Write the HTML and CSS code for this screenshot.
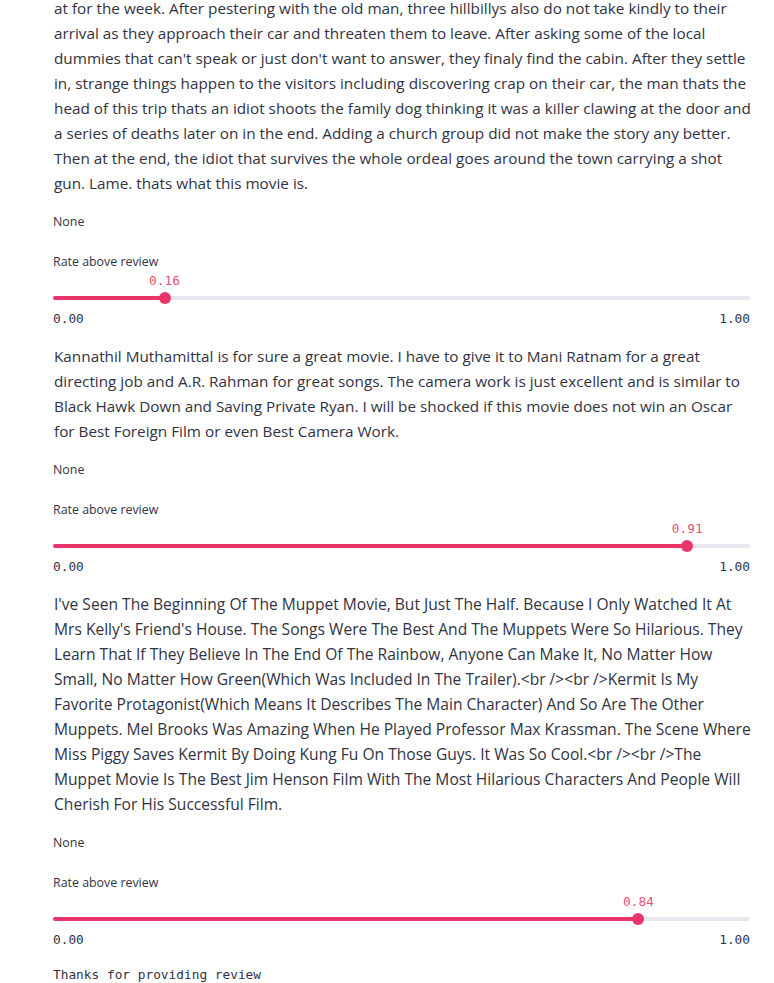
FILE: index.html
```html
<!DOCTYPE html>
<html lang="en">
<head>
<meta charset="utf-8">
<link rel="stylesheet" href="styles.css">
</head>
<body>
<main class="main">
  <p class="review first">at for the week. After pestering with the old man, three hillbillys also do not take kindly to their arrival as they approach their car and threaten them to leave. After asking some of the local dummies that can't speak or just don't want to answer, they finaly find the cabin. After they settle in, strange things happen to the visitors including discovering crap on their car, the man thats the head of this trip thats an idiot shoots the family dog thinking it was a killer clawing at the door and a series of deaths later on in the end. Adding a church group did not make the story any better. Then at the end, the idiot that survives the whole ordeal goes around the town carrying a shot gun. Lame. thats what this movie is.</p>
  <div class="none">None</div>
  <div class="slider">
    <div class="slider-label">Rate above review</div>
    <div class="slider-body">
      <div class="track">
        <div class="track-fill" style="width:16%"></div>
        <div class="thumb" style="left:16%"><span class="thumb-value">0.16</span></div>
      </div>
      <div class="ticks"><span>0.00</span><span>1.00</span></div>
    </div>
  </div>

  <p class="review">Kannathil Muthamittal is for sure a great movie. I have to give it to Mani Ratnam for a great directing job and A.R. Rahman for great songs. The camera work is just excellent and is similar to Black Hawk Down and Saving Private Ryan. I will be shocked if this movie does not win an Oscar for Best Foreign Film or even Best Camera Work.</p>
  <div class="none">None</div>
  <div class="slider">
    <div class="slider-label">Rate above review</div>
    <div class="slider-body">
      <div class="track">
        <div class="track-fill" style="width:91%"></div>
        <div class="thumb" style="left:91%"><span class="thumb-value">0.91</span></div>
      </div>
      <div class="ticks"><span>0.00</span><span>1.00</span></div>
    </div>
  </div>

  <p class="review title-case">I've Seen The Beginning Of The Muppet Movie, But Just The Half. Because I Only Watched It At Mrs Kelly's Friend's House. The Songs Were The Best And The Muppets Were So Hilarious. They Learn That If They Believe In The End Of The Rainbow, Anyone Can Make It, No Matter How Small, No Matter How Green(Which Was Included In The Trailer).&lt;br /&gt;&lt;br /&gt;Kermit Is My Favorite Protagonist(Which Means It Describes The Main Character) And So Are The Other Muppets. Mel Brooks Was Amazing When He Played Professor Max Krassman. The Scene Where Miss Piggy Saves Kermit By Doing Kung Fu On Those Guys. It Was So Cool.&lt;br /&gt;&lt;br /&gt;The Muppet Movie Is The Best Jim Henson Film With The Most Hilarious Characters And People Will Cherish For His Successful Film.</p>
  <div class="none">None</div>
  <div class="slider">
    <div class="slider-label">Rate above review</div>
    <div class="slider-body">
      <div class="track">
        <div class="track-fill" style="width:84%"></div>
        <div class="thumb" style="left:84%"><span class="thumb-value">0.84</span></div>
      </div>
      <div class="ticks"><span>0.00</span><span>1.00</span></div>
    </div>
  </div>

  <div class="thanks">Thanks for providing review</div>
</main>
</body>
</html>
```
FILE: styles.css
```css
html, body {
  margin: 0;
  padding: 0;
  background: #ffffff;
}

body {
  color: #31333f;
  font-family: "Open Sans", "Noto Sans", sans-serif;
  overflow: hidden;
}

.main {
  width: 701px;
  padding-left: 53px;
  display: flex;
  flex-direction: column;
}

.review {
  margin: 0;
  padding-left: 1px;
  padding-right: 1px;
  font-size: 15.3px;
  line-height: 25px;
}

.review.first {
  margin-top: -4.5px;
}

.review.title-case {
  font-size: 15.6px;
}

.none {
  margin-top: 16.5px;
  font-size: 12.4px;
  line-height: 20px;
}

.slider {
  width: 697px;
  margin-top: 20px;
  margin-bottom: 12.5px;
  display: flex;
  flex-direction: column;
}

.slider-label {
  font-size: 12.4px;
  line-height: 20px;
}

.slider-body {
  padding-top: 17px;
  display: flex;
  flex-direction: column;
}

.track {
  position: relative;
  height: 4px;
  margin: 7px 0;
  border-radius: 2px;
  background: #e6e8ee;
}

.track-fill {
  height: 100%;
  border-radius: 2px;
  background: #e9356a;
}

.thumb {
  position: absolute;
  top: -4px;
  width: 12px;
  height: 12px;
  margin-left: -6px;
  border-radius: 50%;
  background: #e9356a;
}

.thumb-value {
  position: absolute;
  bottom: 15px;
  left: 50%;
  transform: translateX(-50%);
  font-family: "DejaVu Sans Mono", monospace;
  font-size: 12.8px;
  line-height: 16px;
  color: #e8507a;
  white-space: nowrap;
}

.ticks {
  display: flex;
  justify-content: space-between;
  font-family: "DejaVu Sans Mono", monospace;
  font-size: 12.8px;
  line-height: 24px;
  color: #31333f;
}

.thanks {
  margin-top: 0.5px;
  font-family: "DejaVu Sans Mono", monospace;
  font-size: 12.8px;
  line-height: 20px;
}
```
